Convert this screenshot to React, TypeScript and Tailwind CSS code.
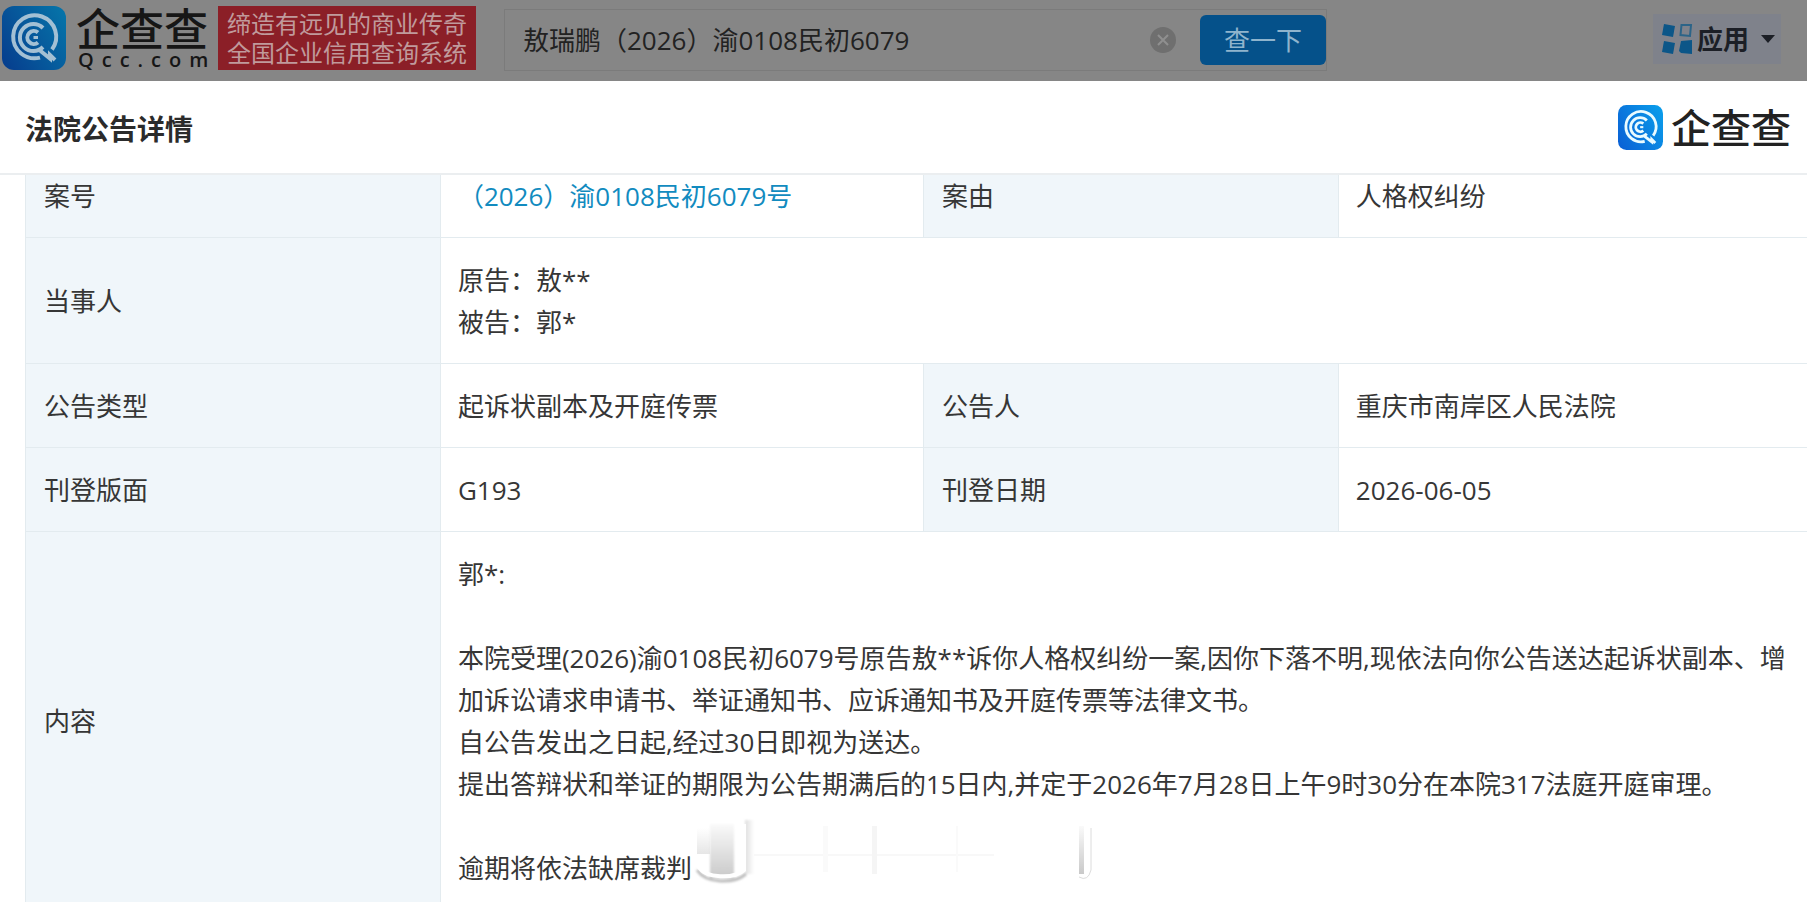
import React, { useState } from 'react';

interface LogoProps {
  size: 'sm' | 'lg';
  dimmed?: boolean;
}

const LogoMark: React.FC<LogoProps> = ({ size, dimmed }) => {
  const id = dimmed ? 'mark-dim' : 'mark';
  return (
    <svg
      viewBox="0 0 64 64"
      className={size === 'lg' ? 'size-16 shrink-0' : 'size-[45px] shrink-0'}
      aria-hidden="true"
    >
      <defs>
        <linearGradient id={id} x1="0" y1="0.8" x2="1" y2="0.2">
          <stop offset="0" stopColor={dimmed ? '#06408f' : '#0a63d6'} />
          <stop offset="1" stopColor={dimmed ? '#0672a8' : '#0a9bea'} />
        </linearGradient>
      </defs>
      <rect width="64" height="64" rx="12" fill={`url(#${id})`} />
      <g fill="none" stroke={dimmed ? '#a3c0d4' : '#e9fbff'} strokeWidth="4">
        <path d="M38 51.6 A21.5 21.5 0 1 1 50 43.5" />
        <path d="M38 44.5 L48 52.5 V49 L53 54" />
        <path d="M41 41 A13.5 13.5 0 1 1 41 22" />
        <path d="M36 36.5 A6.5 6.5 0 1 1 36 26.5" />
        <path d="M31.5 31.5 H36" strokeWidth="3" />
      </g>
    </svg>
  );
};

const AppsIcon: React.FC = () => (
  <svg viewBox="0 0 32 32" className="size-8" aria-hidden="true">
    <g fill="#0c5688">
      <path d="M3 1 L14 3 L12 14 L1 12 Z" />
      <path d="M3 18 L14 20 L12 31 L1 29 Z" />
      <path d="M20 18 L31 17 L31 31 L20 30 L18 28 Z" />
    </g>
    <path d="M20.5 2 L30 2 L29 13 L19.5 12 Z" fill="none" stroke="#2c6488" strokeWidth="2" />
  </svg>
);

// Faded stamp that trails the last line of the notice
const Smudge: React.FC = () => (
  <svg viewBox="0 0 420 70" className="absolute left-full bottom-0 h-[70px] w-[420px]" aria-hidden="true">
    <defs>
      <linearGradient id="smudge-v" x1="0" y1="0" x2="0" y2="1">
        <stop offset="0" stopColor="#fafafa" />
        <stop offset="1" stopColor="#c9c9c9" />
      </linearGradient>
      <linearGradient id="smudge-h" x1="0" y1="0" x2="1" y2="0">
        <stop offset="0" stopColor="#dedede" />
        <stop offset="1" stopColor="#ffffff" />
      </linearGradient>
      <linearGradient id="smudge-side" x1="0" y1="0" x2="0" y2="1">
        <stop offset="0" stopColor="#ffffff" />
        <stop offset="1" stopColor="#e6e6e6" />
      </linearGradient>
      <filter id="smudge-soft">
        <feGaussianBlur stdDeviation="1" />
      </filter>
    </defs>
    <rect x="5" y="12" width="13" height="26" fill="url(#smudge-side)" />
    <g filter="url(#smudge-soft)">
      <rect x="18" y="8" width="24" height="54" fill="url(#smudge-v)" />
      <rect x="53" y="4" width="9" height="54" fill="url(#smudge-h)" />
      <path d="M5 54 C14 68 42 68 54 58" fill="none" stroke="#bdbdbd" strokeWidth="3" />
    </g>
    <path d="M6 50 C14 63 42 63 52 54 V8" fill="none" stroke="#ffffff" strokeWidth="4" />
    <rect x="62" y="38" width="240" height="2" fill="#f8f8f8" />
    <rect x="131" y="10" width="5" height="46" fill="#fafafa" />
    <rect x="180" y="10" width="5" height="48" fill="#f5f5f5" />
    <rect x="264" y="10" width="2" height="46" fill="#fafafa" />
    <rect x="387" y="10" width="5" height="48" fill="url(#smudge-v)" />
    <path d="M387 61 Q396 66 399 54 V12" fill="none" stroke="#dcdcdc" strokeWidth="1" />
  </svg>
);

const TopBar: React.FC = () => {
  const [keyword, setKeyword] = useState('敖瑞鹏（2026）渝0108民初6079');

  return (
    <header className="flex h-[81px] items-start bg-[#868686] pr-[26px] pl-[2px] pt-[6px]">
      <a href="#" className="flex shrink-0 items-start gap-[10px] text-[#161616]">
        <LogoMark size="lg" dimmed />
        <span className="flex w-[134px] flex-col">
          <span className="text-[44px] leading-[46px] font-medium whitespace-nowrap">企查查</span>
          <span className="pl-[2px] text-xl leading-4 font-semibold tracking-[8px] whitespace-nowrap">Qcc.com</span>
        </span>
      </a>
      <p className="ml-2 shrink-0 bg-[#8b1f27] px-[9px] py-[3px] text-2xl leading-[29px] text-[#c09a9c]">
        缔造有远见的商业传奇
        <br />
        全国企业信用查询系统
      </p>
      <form
        className="ml-7 mt-[3px] flex h-[62px] flex-1 items-center border border-[#7b7b7b] pl-[18px]"
        onSubmit={(e) => e.preventDefault()}
      >
        <input
          aria-label="搜索"
          value={keyword}
          onChange={(e) => setKeyword(e.target.value)}
          className="min-w-0 flex-1 bg-transparent text-[26px] text-[#222] outline-none"
        />
        <button type="button" aria-label="清除" className="mr-6 size-[26px]" onClick={() => setKeyword('')}>
          <svg viewBox="0 0 26 26" aria-hidden="true">
            <circle cx="13" cy="13" r="13" fill="#6f6f6f" />
            <path d="M8 8 L18 18 M18 8 L8 18" stroke="#8f8f8f" strokeWidth="2" />
          </svg>
        </button>
        <button type="submit" className="h-[50px] w-[126px] rounded-md bg-[#05518a] text-[26px] text-[#8fb4cd]">
          查一下
        </button>
      </form>
      <button
        type="button"
        className="ml-[326px] mt-2 flex h-[50px] w-[128px] shrink-0 items-center gap-1 bg-[#7f828b] pl-2 text-[26px] font-bold text-[#1c1f26]"
      >
        <AppsIcon />
        应用
        <svg viewBox="0 0 14 8" className="ml-2 h-2 w-[14px]" aria-hidden="true">
          <path d="M0 0 H14 L7 8 Z" fill="#1c1f26" />
        </svg>
      </button>
    </header>
  );
};

const labelCell = 'border border-[#e3ebef] bg-[#f0f6fa] px-[18px] pt-[21px] pb-5 text-left font-normal';
const valueCell = 'border border-[#e3ebef] px-[17px] pt-[21px] pb-5';

const NoticeTable: React.FC = () => (
  <table className="w-[calc(100%+15px)] table-fixed border-collapse text-[26px] leading-[42px] text-[#363636]">
    <colgroup>
      <col className="w-[23.1%]" />
      <col className="w-[26.9%]" />
      <col className="w-[23.1%]" />
      <col className="w-[26.9%]" />
    </colgroup>
    <tbody>
      <tr>
        <th scope="row" className="border border-t-0 border-[#e3ebef] bg-[#f0f6fa] px-[18px] pb-5 text-left font-normal">案号</th>
        <td className="border border-t-0 border-[#e3ebef] px-[17px] pb-5">
          <a href="#" className="text-[#128bbf]">（2026）渝0108民初6079号</a>
        </td>
        <th scope="row" className="border border-t-0 border-[#e3ebef] bg-[#f0f6fa] px-[18px] pb-5 text-left font-normal">案由</th>
        <td className="border border-t-0 border-[#e3ebef] px-[17px] pb-5">人格权纠纷</td>
      </tr>
      <tr>
        <th scope="row" className={labelCell}>当事人</th>
        <td colSpan={3} className={valueCell}>
          <p>原告：敖**</p>
          <p>被告：郭*</p>
        </td>
      </tr>
      <tr>
        <th scope="row" className={labelCell}>公告类型</th>
        <td className={valueCell}>起诉状副本及开庭传票</td>
        <th scope="row" className={labelCell}>公告人</th>
        <td className={valueCell}>重庆市南岸区人民法院</td>
      </tr>
      <tr>
        <th scope="row" className={labelCell}>刊登版面</th>
        <td className={valueCell}>G193</td>
        <th scope="row" className={labelCell}>刊登日期</th>
        <td className={valueCell}>2026-06-05</td>
      </tr>
      <tr>
        <th scope="row" className={labelCell}>内容</th>
        <td colSpan={3} className={valueCell}>
          <p className="mb-[42px]">郭*:</p>
          <p>
            本院受理(2026)渝0108民初6079号原告敖**诉你人格权纠纷一案,因你下落不明,现依法向你公告送达起诉状副本、增加诉讼请求申请书、举证通知书、应诉通知书及开庭传票等法律文书。
          </p>
          <p>自公告发出之日起,经过30日即视为送达。</p>
          <p>提出答辩状和举证的期限为公告期满后的15日内,并定于2026年7月28日上午9时30分在本院317法庭开庭审理。</p>
          <p className="mt-[42px]">
            <span className="relative">
              逾期将依法缺席裁判
              <Smudge />
            </span>
          </p>
        </td>
      </tr>
    </tbody>
  </table>
);

export default function App() {
  return (
    <div lang="zh-CN" className="flex h-screen flex-col overflow-hidden bg-white font-['Open_Sans','Noto_Sans_CJK_SC',sans-serif]">
      <TopBar />
      <main className="min-h-0 flex-1">
        <div className="flex h-[92px] items-center justify-between pr-4 pl-[25px]">
          <h1 className="pt-1 text-[28px] font-bold text-[#2b2b2b]">法院公告详情</h1>
          <div className="flex items-center gap-2 text-[#222]">
            <LogoMark size="sm" />
            <span className="text-[40px] leading-[45px] font-medium">企查查</span>
          </div>
        </div>
        <div className="overflow-hidden border-t-2 border-[#ebeef0] pl-[25px]">
          <NoticeTable />
        </div>
      </main>
    </div>
  );
}
